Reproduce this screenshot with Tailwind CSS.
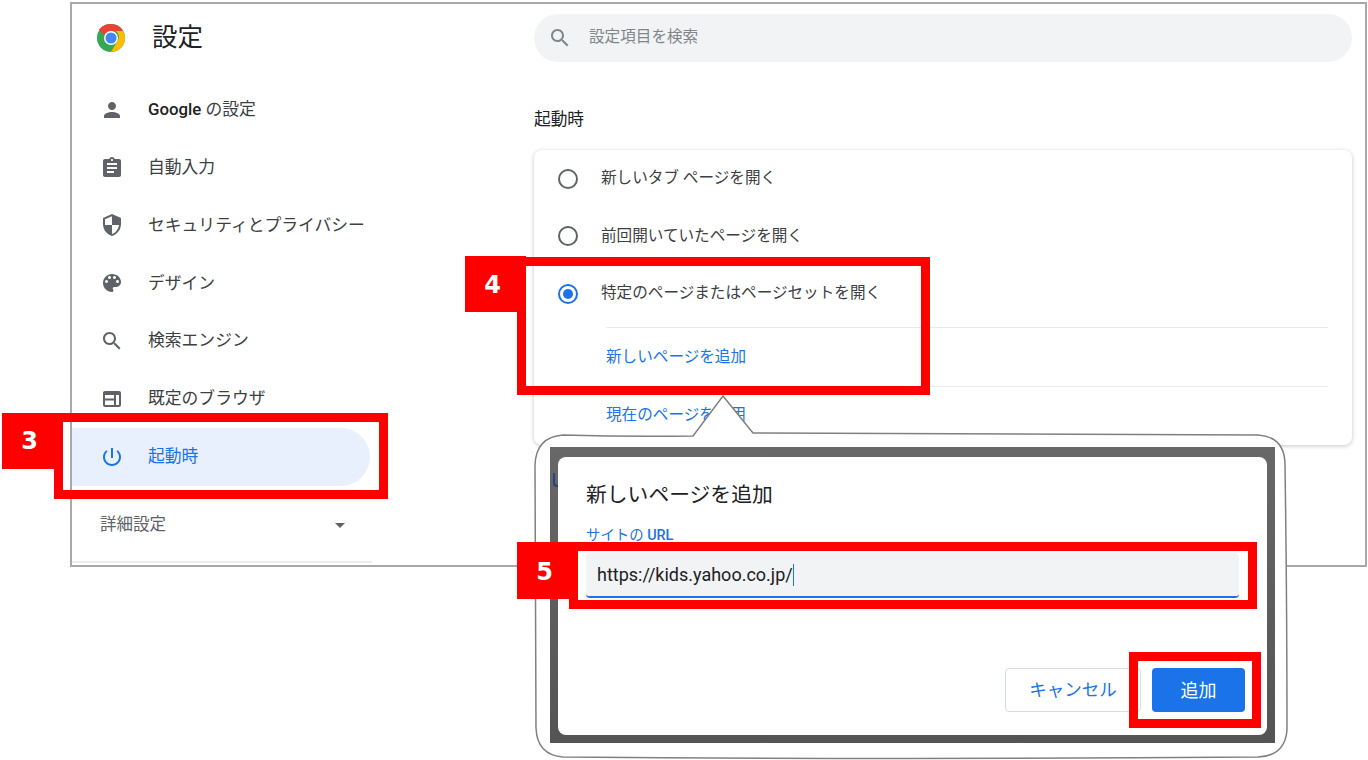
<!DOCTYPE html>
<html lang="ja">
<head>
<meta charset="UTF-8">
<title>設定</title>
<script src="https://cdn.jsdelivr.net/npm/@tailwindcss/browser@4"></script>
</head>
<body class="bg-white">
<div class="relative w-[1368px] h-[760px] overflow-hidden bg-white text-[#202124] font-['Roboto','Noto_Sans_CJK_JP',sans-serif]">

  <!-- 設定ウィンドウ -->
  <div class="absolute left-[70px] top-[2px] w-[1297px] h-[565px] border-2 border-[#a8a8a8] flex">
    <!-- サイドバー -->
    <div class="w-[300px] h-[559px] border-b-2 border-[#eeeeee] flex flex-col shrink-0">
      <div class="h-[77px] flex items-center pl-[25px] pb-[9px] gap-[27px]">
        <svg class="w-[28px] h-[28px]" viewBox="0 0 48 48">
          <circle cx="24" cy="24" r="24" fill="#34a853"/>
          <path d="M24 0a24 24 0 0 1 20.8 12H24a12 12 0 0 0-11.2 7.7L3.2 10A24 24 0 0 1 24 0z" fill="#ea4335"/>
          <path d="M44.8 12A24 24 0 0 1 24 48l10.4-18a12 12 0 0 0-2-18z" fill="#fbbc04"/>
          <circle cx="24" cy="24" r="12" fill="#fff"/>
          <circle cx="24" cy="24" r="9.5" fill="#4285f4"/>
        </svg>
        <span class="text-[25.5px] leading-none">設定</span>
      </div>
      <a class="h-[57.8px] flex items-center pl-[28px] gap-[24px] text-[16.8px] font-medium">
        <svg class="w-[24px] h-[24px] fill-[#5f6368]" viewBox="0 0 24 24"><path d="M12 12c2.21 0 4-1.79 4-4s-1.79-4-4-4-4 1.79-4 4 1.79 4 4 4zm0 2c-2.67 0-8 1.34-8 4v2h16v-2c0-2.66-5.33-4-8-4z"/></svg>
        <span>Google <span class="font-normal text-[#3c4043]">の設定</span></span>
      </a>
      <a class="h-[57.8px] flex items-center pl-[28px] gap-[24px] text-[16.8px] text-[#3c4043]">
        <svg class="w-[24px] h-[24px] fill-[#5f6368]" viewBox="0 0 24 24"><path d="M19 3h-4.18C14.4 1.84 13.3 1 12 1c-1.3 0-2.4.84-2.82 2H5c-1.1 0-2 .9-2 2v14c0 1.1.9 2 2 2h14c1.1 0 2-.9 2-2V5c0-1.1-.9-2-2-2zm-7 0c.55 0 1 .45 1 1s-.45 1-1 1-1-.45-1-1 .45-1 1-1zm2 14H7v-2h7v2zm3-4H7v-2h10v2zm0-4H7V7h10v2z"/></svg>
        <span>自動入力</span>
      </a>
      <a class="h-[57.8px] flex items-center pl-[28px] gap-[24px] text-[16.8px] text-[#3c4043]">
        <svg class="w-[24px] h-[24px] fill-[#5f6368]" viewBox="0 0 24 24"><path d="M12 1L3 5v6c0 5.55 3.84 10.74 9 12 5.16-1.26 9-6.45 9-12V5l-9-4zm0 10.99h7c-.53 4.12-3.28 7.79-7 8.94V12H5V6.3l7-3.11v8.8z"/></svg>
        <span>セキュリティとプライバシー</span>
      </a>
      <a class="h-[57.8px] flex items-center pl-[28px] gap-[24px] text-[16.8px] text-[#3c4043]">
        <svg class="w-[24px] h-[24px] fill-[#5f6368]" viewBox="0 0 24 24"><path d="M12 3c-4.97 0-9 4.03-9 9s4.03 9 9 9c.83 0 1.5-.67 1.5-1.5 0-.39-.15-.74-.39-1.01-.23-.26-.38-.61-.38-.99 0-.83.67-1.5 1.5-1.5H16c2.76 0 5-2.24 5-5 0-4.42-4.03-8-9-8zm-5.5 9c-.83 0-1.5-.67-1.5-1.5S5.67 9 6.5 9 8 9.67 8 10.5 7.33 12 6.5 12zm3-4C8.67 8 8 7.33 8 6.5S8.67 5 9.5 5s1.5.67 1.5 1.5S10.33 8 9.5 8zm5 0c-.83 0-1.5-.67-1.5-1.5S13.67 5 14.5 5s1.5.67 1.5 1.5S15.33 8 14.5 8zm3 4c-.83 0-1.5-.67-1.5-1.5S16.67 9 17.5 9s1.5.67 1.5 1.5-.67 1.5-1.5 1.5z"/></svg>
        <span>デザイン</span>
      </a>
      <a class="h-[57.8px] flex items-center pl-[28px] gap-[24px] text-[16.8px] text-[#3c4043]">
        <svg class="w-[24px] h-[24px] fill-[#5f6368]" viewBox="0 0 24 24"><path d="M15.5 14h-.79l-.28-.27C15.41 12.59 16 11.11 16 9.5 16 5.91 13.09 3 9.5 3S3 5.91 3 9.5 5.91 16 9.5 16c1.61 0 3.09-.59 4.23-1.57l.27.28v.79l5 4.99L20.49 19l-4.99-5zm-6 0C7.01 14 5 11.99 5 9.5S7.01 5 9.5 5 14 7.01 14 9.5 11.99 14 9.5 14z"/></svg>
        <span>検索エンジン</span>
      </a>
      <a class="h-[57.8px] flex items-center pl-[28px] gap-[24px] text-[16.8px] text-[#3c4043]">
        <svg class="w-[24px] h-[24px] fill-[#5f6368]" viewBox="0 0 24 24"><path d="M19 4H5c-1.1 0-2 .9-2 2v12c0 1.1.9 2 2 2h14c1.100 0 2-.9 2-2V6c0-1.100-.9-2-2-2zm0 14h-3V8h3v10zm-5 0H5v-4.500h9V18zm0-6.500H5V8h9v3.500z"/></svg>
        <span>既定のブラウザ</span>
      </a>
      <a class="h-[57.8px] w-[298px] flex items-center pl-[28px] gap-[24px] text-[16.8px] text-[#1a73e8] bg-[#e8f0fe] rounded-r-[29px]">
        <svg class="w-[24px] h-[24px] fill-[#1a73e8]" viewBox="0 0 24 24"><path d="M13 3h-2v10h2V3zm4.83 2.17l-1.42 1.42C17.99 7.86 19 9.81 19 12c0 3.87-3.13 7-7 7s-7-3.13-7-7c0-2.19 1.01-4.14 2.58-5.42L6.17 5.17C4.23 6.82 3 9.26 3 12c0 4.97 4.03 9 9 9s9-4.03 9-9c0-2.74-1.23-5.18-3.17-6.83z"/></svg>
        <span>起動時</span>
      </a>
      <div class="mt-[11px] h-[58px] flex items-center justify-between pl-[28px] pr-[27px] text-[16.5px] text-[#5f6368]">
        <span>詳細設定</span>
        <span class="w-0 h-0 border-x-[5px] border-x-transparent border-t-[5px] border-t-[#5f6368]"></span>
      </div>
    </div>

    <!-- メイン -->
    <div class="ml-[162px] w-[818px] pt-[10px] flex flex-col">
      <div class="h-[48px] rounded-[24px] bg-[#f1f3f4] flex items-center pl-[14px] gap-[17px] text-[15.6px] text-[#80868b]">
        <svg class="w-[24px] h-[24px] fill-[#80868b]" viewBox="0 0 24 24"><path d="M15.5 14h-.79l-.28-.27C15.41 12.59 16 11.11 16 9.5 16 5.91 13.09 3 9.5 3S3 5.91 3 9.5 5.91 16 9.5 16c1.61 0 3.09-.59 4.23-1.57l.27.28v.79l5 4.99L20.49 19l-4.99-5zm-6 0C7.01 14 5 11.99 5 9.5S7.01 5 9.5 5 14 7.01 14 9.5 11.99 14 9.5 14z"/></svg>
        <span>設定項目を検索</span>
      </div>
      <div class="mt-[45px] h-[25px] flex items-center text-[16.7px]">起動時</div>
      <div class="mt-[18px] h-[295px] rounded-[8px] bg-white shadow-[0_1px_4px_rgba(60,64,67,0.3)] text-[15.6px] text-[#3c4043]">
        <div class="h-[57.5px] flex items-center pl-[24px] gap-[23px]">
          <span class="w-[20px] h-[20px] rounded-full border-2 border-[#5f6368]"></span>
          <span>新しいタブ ページを開く</span>
        </div>
        <div class="h-[57.5px] flex items-center pl-[24px] gap-[23px]">
          <span class="w-[20px] h-[20px] rounded-full border-2 border-[#5f6368]"></span>
          <span>前回開いていたページを開く</span>
        </div>
        <div class="h-[57.5px] flex items-center pl-[24px] gap-[23px]">
          <span class="w-[20px] h-[20px] rounded-full border-2 border-[#1a73e8] flex items-center justify-center"><span class="w-[10px] h-[10px] rounded-full bg-[#1a73e8]"></span></span>
          <span>特定のページまたはページセットを開く</span>
        </div>
        <div class="ml-[72px] mr-[24px] mt-[4px] pt-[2px] border-t border-[#e8eaed] h-[59px] flex items-center text-[#1a73e8]">新しいページを追加</div>
        <div class="ml-[72px] mr-[24px] pt-[4px] border-t border-[#e8eaed] h-[56px] flex items-center text-[#1a73e8]">現在のページを使用</div>
      </div>
    </div>
  </div>

  <!-- 吹き出し -->
  <svg class="absolute left-0 top-0 w-[1368px] h-[760px]" viewBox="0 0 1368 760">
    <path d="M563 435 Q630 437 693 436 L723 396 L753 433 Q1000 435 1258 435 Q1285 437 1285 465 Q1287 600 1287 730 Q1285 756 1258 757 Q900 760 563 757 Q537 755 536 728 L535 465 Q536 437 563 435 Z" fill="#ffffff" stroke="#808080" stroke-width="1.5"/>
  </svg>

  <!-- ダイアログ -->
  <div class="absolute left-[550px] top-[447px] w-[725px] h-[296px] p-[8px] pt-[10px] bg-gradient-to-b from-[#686868] to-[#545454]">
    <span class="absolute left-[3px] top-[26px] w-[5px] h-[14px] border-l-2 border-b-2 rounded-bl-[4px] border-[#23467c]"></span>
    <div class="w-[709px] h-[278px] bg-white rounded-[8px] flex flex-col pl-[28px] pr-[28px]">
      <div class="mt-[25px] text-[20.8px] leading-[26px]">新しいページを追加</div>
      <div class="mt-[20px] text-[14.4px] leading-[16px] text-[#1a73e8]">サイトの <span class="font-medium">URL</span></div>
      <div class="mt-[9px] h-[45px] bg-[#f1f3f4] rounded-[4px] border-b-2 border-[#1a73e8] flex items-center pl-[11px] text-[18px]">
        <span>https://kids.yahoo.co.jp/</span><span class="w-px h-[22px] bg-[#1a73e8]"></span>
      </div>
      <div class="mt-[70px] flex justify-end gap-[11px] mr-[-6px]">
        <div class="w-[136px] h-[44px] rounded-[4px] border border-[#dadce0] flex items-center justify-center text-[17.5px] text-[#1a73e8]">キャンセル</div>
        <div class="w-[93px] h-[44px] rounded-[4px] bg-[#1a73e8] flex items-center justify-center text-[18px] text-white">追加</div>
      </div>
    </div>
  </div>

  <!-- 赤枠と番号 -->
  <div class="absolute left-[54px] top-[413px] w-[334px] h-[86px] border-[9px] border-[#ff0000]"></div>
  <div class="absolute left-[2px] top-[413px] w-[61px] h-[56px] bg-[#ff0000] flex items-center justify-center pr-[6px] text-white text-[24px] font-bold font-['DejaVu_Sans',sans-serif]">3</div>

  <div class="absolute left-[517px] top-[257px] w-[413px] h-[138px] border-[9px] border-[#ff0000]"></div>
  <div class="absolute left-[465px] top-[256px] w-[61px] h-[56px] bg-[#ff0000] flex items-center justify-center pr-[6px] pt-[2px] text-white text-[24px] font-bold font-['DejaVu_Sans',sans-serif]">4</div>

  <div class="absolute left-[569px] top-[542px] w-[688px] h-[67px] border-[9px] border-[#ff0000]"></div>
  <div class="absolute left-[517px] top-[542px] w-[61px] h-[57px] bg-[#ff0000] flex items-center justify-center pr-[6px] pt-[2px] text-white text-[24px] font-bold font-['DejaVu_Sans',sans-serif]">5</div>

  <div class="absolute left-[1129px] top-[652px] w-[132px] h-[76px] border-[9px] border-[#ff0000]"></div>
</div>
</body>
</html>
